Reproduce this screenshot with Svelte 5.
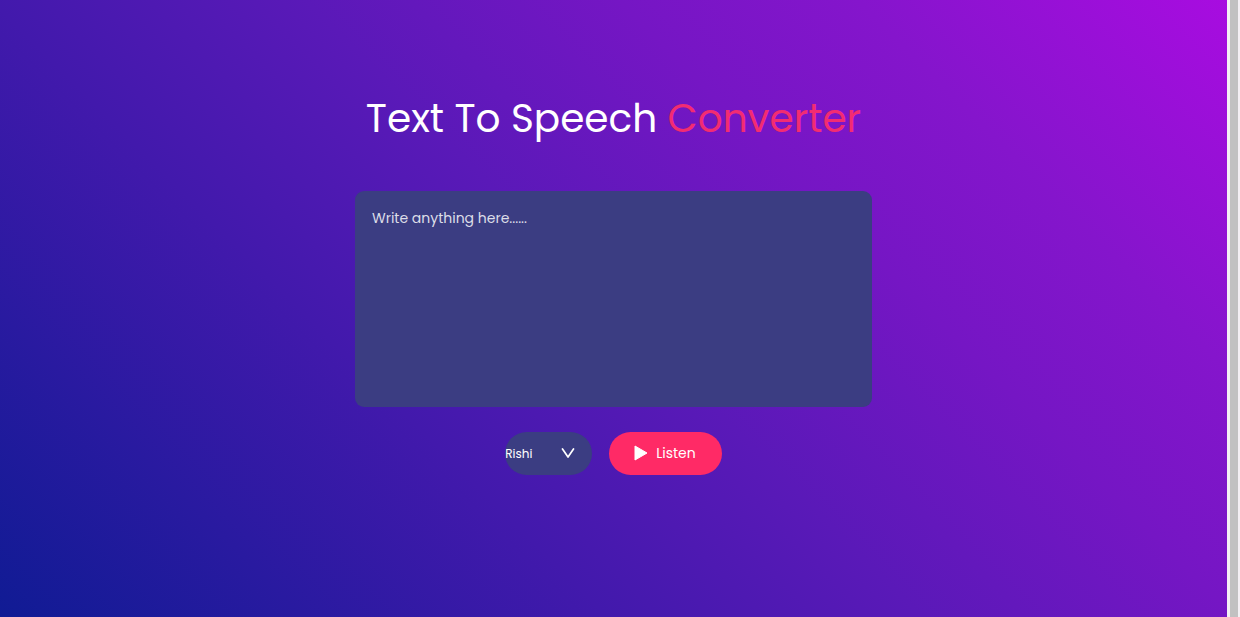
<script>
  let text = $state('');
  let voice = $state('Rishi');
  function listen() {
    if (text && 'speechSynthesis' in window) {
      const speech = new SpeechSynthesisUtterance(text);
      speech.voice = speechSynthesis.getVoices().find((v) => v.name === voice) ?? null;
      speechSynthesis.speak(speech);
    }
  }
</script>

<div class="page">
  <main class="hero">
    <h1>Text To Speech <span>Converter</span></h1>
    <textarea aria-label="Text to speak" placeholder="Write anything here......" bind:value={text}></textarea>
    <div class="row">
      <div class="voice">
        <select aria-label="Voice" bind:value={voice}>
          <option>Rishi</option>
        </select>
        <svg viewBox="0 0 14 10" width="14" height="10" aria-hidden="true">
          <path d="M1.5 1 7 9 12.5 1" fill="none" stroke="#fff" stroke-width="1.7" stroke-linecap="round" stroke-linejoin="round" />
        </svg>
      </div>
      <button type="button" onclick={listen}>
        <svg viewBox="0 0 14 16" width="14" height="16" aria-hidden="true">
          <path d="M1 1 13 8 1 15Z" fill="#fff" stroke="#fff" stroke-linejoin="round" />
        </svg>
        Listen
      </button>
    </div>
  </main>
  <div class="track"><div class="thumb"></div></div>
</div>

<style>
  :global(body) { margin: 0; }
  .page {
    display: flex;
    min-height: 100vh;
    font-family: Poppins, "Open Sans", sans-serif;
  }
  .hero {
    flex: 1;
    display: flex;
    flex-direction: column;
    align-items: center;
    justify-content: center;
    box-sizing: border-box;
    padding: 0 24px 56px;
    color: #fff;
    background: linear-gradient(45deg, #101b94, #4219ac 33%, #5a19b8 50%, #7516c4 67%, #8515cc 80%, #a80ce0);
  }
  h1 {
    margin: 0 0 40px;
    font-size: 39px;
    line-height: 64px;
    font-weight: 400;
    text-align: center;
  }
  h1 span { color: #f22c72; }
  textarea {
    box-sizing: border-box;
    width: 100%;
    max-width: 517px;
    height: 216px;
    margin: 0 0 25px;
    padding: 16px 17px;
    border: 0;
    border-radius: 9px;
    outline: 0;
    resize: none;
    color: #fff;
    background: #3b3d82;
    font: inherit;
    font-size: 14px;
    line-height: 22px;
  }
  textarea::placeholder { color: #dddde8; opacity: 1; }
  .row { display: flex; gap: 17px; }
  .voice { display: grid; align-items: center; }
  .voice > * { grid-area: 1 / 1; }
  .voice svg { justify-self: end; margin-right: 17px; pointer-events: none; }
  select {
    appearance: none;
    width: 87px;
    height: 43px;
    padding: 0;
    border: 0;
    border-radius: 22px;
    color: #fff;
    background: #3b3d82;
    font: inherit;
    font-size: 12px;
  }
  button {
    display: flex;
    align-items: center;
    gap: 8px;
    height: 43px;
    padding: 0 26px 0 25px;
    border: 0;
    border-radius: 22px;
    color: #fff;
    background: #ff2a66;
    font: inherit;
    font-size: 14px;
  }
  .track { width: 10px; padding: 0 0 0 3px; background: #f4f0f4; }
  .thumb { width: 8px; height: 100%; background: #c1c1c1; }
</style>
